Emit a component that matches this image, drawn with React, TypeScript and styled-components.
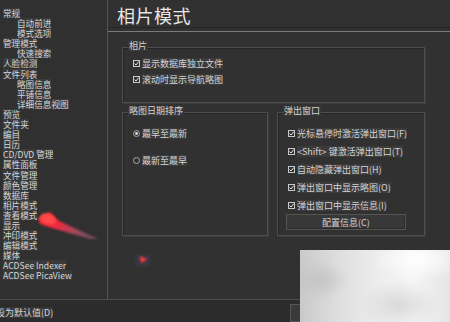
import React from 'react';
import styled, { createGlobalStyle } from 'styled-components';

const GlobalStyle = createGlobalStyle`
  * { box-sizing: border-box; }
  body {
    margin: 0;
    background: #313131;
    font-family: "Noto Sans CJK SC", "Noto Sans", sans-serif;
    color: #d2d2d2;
  }
`;

const treeItems: { label: string; child?: boolean }[] = [
  { label: '常规' },
  { label: '自动前进', child: true },
  { label: '模式选项', child: true },
  { label: '管理模式' },
  { label: '快速搜索', child: true },
  { label: '人脸检测' },
  { label: '文件列表' },
  { label: '略图信息', child: true },
  { label: '平铺信息', child: true },
  { label: '详细信息视图', child: true },
  { label: '预览' },
  { label: '文件夹' },
  { label: '编目' },
  { label: '日历' },
  { label: 'CD/DVD 管理' },
  { label: '属性面板' },
  { label: '文件管理' },
  { label: '颜色管理' },
  { label: '数据库' },
  { label: '相片模式' },
  { label: '查看模式' },
  { label: '显示' },
  { label: '冲印模式' },
  { label: '编辑模式' },
  { label: '媒体' },
  { label: 'ACDSee Indexer' },
  { label: 'ACDSee PicaView' },
];

const popupOptions = [
  '光标悬停时激活弹出窗口(F)',
  '<Shift> 键激活弹出窗口(T)',
  '自动隐藏弹出窗口(H)',
  '弹出窗口中显示略图(O)',
  '弹出窗口中显示信息(I)',
];

const CheckBox = () => (
  <svg width="7" height="7" viewBox="0 0 7 7">
    <rect x="0.5" y="0.5" width="6" height="6" fill="none" stroke="#c8c8c8" strokeWidth="1" />
    <path d="M1.5 3.5 L3 5 L5.8 1.6" fill="none" stroke="#e6e6e6" strokeWidth="1" />
  </svg>
);

const Radio = ({ checked }: { checked?: boolean }) => (
  <svg width="7" height="7" viewBox="0 0 7 7">
    <circle cx="3.5" cy="3.5" r="3" fill="none" stroke="#a8a8a8" strokeWidth="1" />
    {checked && <circle cx="3.5" cy="3.5" r="1.4" fill="#e0e0e0" />}
  </svg>
);

const App: React.FC = () => {
  return (
    <Window>
      <GlobalStyle />
      <Body>
        <Sidebar>
          {treeItems.map((item) => (
            <TreeItem key={item.label} $child={item.child}>
              <span>{item.label}</span>
            </TreeItem>
          ))}
        </Sidebar>
        <Main>
          <Header>相片模式</Header>
          <TitleRule />
          <Content>
            <GroupBox $height={56}>
              <Legend>相片</Legend>
              <OptionList $top={9} $gap={4}>
                <Option>
                  <CheckBox />
                  <span>显示数据库独立文件</span>
                </Option>
                <Option>
                  <CheckBox />
                  <span>滚动时显示导航略图</span>
                </Option>
              </OptionList>
            </GroupBox>
            <GroupRow>
              <GroupBox $height={124}>
                <Legend>略图日期排序</Legend>
                <OptionList $top={14} $gap={15}>
                  <Option>
                    <Radio checked />
                    <span>最早至最新</span>
                  </Option>
                  <Option>
                    <Radio />
                    <span>最新至最早</span>
                  </Option>
                </OptionList>
              </GroupBox>
              <GroupBox $height={124}>
                <Legend>弹出窗口</Legend>
                <OptionList $top={14} $gap={6}>
                  {popupOptions.map((o) => (
                    <Option key={o}>
                      <CheckBox />
                      <span>{o}</span>
                    </Option>
                  ))}
                </OptionList>
                <ConfigButton>配置信息(C)</ConfigButton>
              </GroupBox>
            </GroupRow>
          </Content>
        </Main>
      </Body>
      <Footer>
        <DefaultButton>设为默认值(D)</DefaultButton>
        <OkButton />
      </Footer>

      {/* red annotation arrow pointing at 查看模式 */}
      <Arrow width="75" height="45" viewBox="0 0 75 45">
        <defs>
          <linearGradient id="arrowFade" x1="0" y1="0" x2="1" y2="0.5">
            <stop offset="0" stopColor="#ff3434" />
            <stop offset="0.45" stopColor="#f0283c" />
            <stop offset="1" stopColor="#c86a8a" stopOpacity="0.5" />
          </linearGradient>
          <filter id="soft">
            <feGaussianBlur stdDeviation="1.3" />
          </filter>
        </defs>
        <path d="M8 18 L20 12 L29 21 L68 39 L60 39 L22 28 L10 24 Z" fill="url(#arrowFade)" filter="url(#soft)" />
        <ellipse cx="18" cy="19" rx="8" ry="5" fill="#ff4848" filter="url(#soft)" transform="rotate(22 18 19)" />
      </Arrow>
      <Marker width="18" height="18" viewBox="0 0 18 18">
        <defs>
          <filter id="soft2">
            <feGaussianBlur stdDeviation="0.8" />
          </filter>
        </defs>
        <rect x="1" y="3" width="14" height="11" fill="#4a3a5a" opacity="0.5" filter="url(#soft2)" />
        <path d="M5 4 L12 7.5 L6 11 Z" fill="#ff3a3a" filter="url(#soft2)" />
      </Marker>
      <Watermark />
    </Window>
  );
};

export default App;

const Window = styled.div`
  position: relative;
  width: 450px;
  height: 322px;
  overflow: hidden;
  background: #313131;
  display: grid;
  grid-template-rows: 299px 1fr;
`;

const Body = styled.div`
  display: flex;
  min-height: 0;
`;

const Sidebar = styled.div`
  width: 108px;
  flex-shrink: 0;
  border-right: 1px solid #555;
  padding-top: 8px;
  background: #303030;
`;

const TreeItem = styled.div<{ $child?: boolean }>`
  height: 10.1px;
  line-height: 10px;
  font-size: 8.6px;
  white-space: nowrap;
  padding-left: ${(p) => (p.$child ? '17px' : '3px')};
  color: #d6d6d6;

  span {
    display: inline-block;
    height: 10px;
    line-height: 10px;
    vertical-align: top;
    background: rgba(255, 255, 255, 0.05);
  }
`;

const Main = styled.div`
  flex: 1;
  display: flex;
  flex-direction: column;
`;

const Header = styled.div`
  height: 28px;
  padding: 3px 0 0 9px;
  font-size: 18px;
  line-height: 24px;
  color: #e6e6e6;
  border-bottom: 1px solid #252525;
  letter-spacing: 0.5px;
`;

const TitleRule = styled.div`
  height: 1px;
  margin-top: 3px;
  background: #7a7a7a;
`;

const Content = styled.div`
  padding: 15px 25px 0 14px;
  display: flex;
  flex-direction: column;
  gap: 9px;
`;

const GroupRow = styled.div`
  display: grid;
  grid-template-columns: 146px 1fr;
  gap: 9px;
`;

const GroupBox = styled.div<{ $height: number }>`
  position: relative;
  height: ${(p) => p.$height}px;
  border: 1px solid #4e4e4e;
  box-shadow: inset 1px 1px 0 #262626, 1px 1px 0 #3c3c3c;
  padding: 0 0 0 10px;
  display: flex;
  flex-direction: column;
`;

const Legend = styled.span`
  position: absolute;
  top: -7px;
  left: 5px;
  padding: 0 1px;
  font-size: 9px;
  line-height: 10px;
  color: #d4d4d4;
  background: #373737;
`;

const OptionList = styled.div<{ $top: number; $gap: number }>`
  display: flex;
  flex-direction: column;
  padding-top: ${(p) => p.$top}px;
  gap: ${(p) => p.$gap}px;
`;

const Option = styled.div`
  height: 12px;
  display: flex;
  align-items: center;
  gap: 2px;
  font-size: 9px;
  white-space: nowrap;
  color: #d4d4d4;

  svg {
    flex-shrink: 0;
  }

  span {
    line-height: 11px;
    background: rgba(255, 255, 255, 0.05);
  }
`;

const ConfigButton = styled.div`
  margin: 3px 0 0 -2px;
  width: 120px;
  height: 16px;
  display: flex;
  align-items: center;
  justify-content: center;
  font-size: 9px;
  color: #d0d0d0;
  background: #383838;
  border: 1px solid #555;
  box-shadow: inset -1px -1px 0 #2a2a2a;
`;

const Footer = styled.div`
  display: flex;
  align-items: center;
  border-top: 1px solid #4c4c4c;
  background: #2c2c2c;
  padding-top: 3px;
`;

const DefaultButton = styled.div`
  margin-left: -4px;
  font-size: 9px;
  line-height: 11px;
  color: #d6d6d6;
  white-space: nowrap;
  background: rgba(255, 255, 255, 0.05);
`;

const OkButton = styled.div`
  margin-left: auto;
  width: 160px;
  height: 18px;
  align-self: flex-end;
  background: #3a3a3a;
  border: 1px solid #555;
`;

const Arrow = styled.svg`
  position: absolute;
  left: 30px;
  top: 200px;
`;

const Marker = styled.svg`
  position: absolute;
  left: 135px;
  top: 252px;
`;

const Watermark = styled.div`
  position: absolute;
  left: 300px;
  top: 250px;
  right: 0;
  bottom: 0;
  background:
    radial-gradient(ellipse 30px 20px at 20px 30px, rgba(190, 190, 190, 0.7), transparent),
    radial-gradient(ellipse 40px 25px at 100px 55px, rgba(200, 200, 200, 0.6), transparent),
    radial-gradient(ellipse 50px 20px at 120px 10px, rgba(255, 255, 255, 0.9), transparent),
    linear-gradient(90deg, #c9c9c9 0%, #dedede 25%, #eeeeee 55%, #f6f6f6 75%, #e4e4e4 100%);
`;
